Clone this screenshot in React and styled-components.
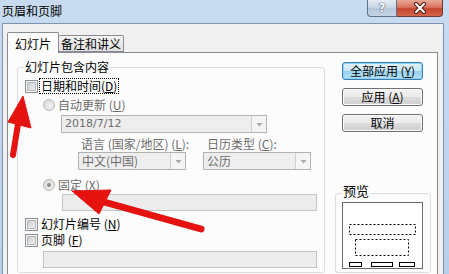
import React from "react";
import styled, { createGlobalStyle } from "styled-components";

const GlobalStyle = createGlobalStyle`
  html, body {
    margin: 0;
    padding: 0;
    background: #fff;
  }
  body {
    font-family: "Noto Sans CJK SC", "Noto Sans", sans-serif;
    font-size: 12px;
    color: #000;
  }
`;

const Window = styled.div`
  position: relative;
  width: 449px;
  height: 274px;
  overflow: hidden;
  display: flex;
  flex-direction: column;
  background: linear-gradient(to bottom, #c8dbf0, #b9cfe9);
`;

const TitleBar = styled.div`
  height: 23px;
  flex: none;
  display: flex;
  align-items: flex-start;
  padding: 0 6px 0 2px;
`;

const Title = styled.div`
  flex: 1;
  margin-top: 4px;
  line-height: 14px;
  font-size: 12px;
`;

const CaptionButton = styled.div`
  height: 16px;
  display: flex;
  align-items: center;
  justify-content: center;
  border: 1px solid ${(p) => (p.$close ? "#6d3a33" : "#5f7089")};
  border-top: none;
  width: ${(p) => (p.$close ? "45px" : "28px")};
  border-radius: ${(p) => (p.$close ? "0 0 4px 0" : "0 0 0 4px")};
  border-left: ${(p) => (p.$close ? "none" : undefined)};
  background: ${(p) =>
    p.$close
      ? "linear-gradient(to bottom, #e9a796 0%, #d9735f 45%, #c5432c 55%, #d3654d 100%)"
      : "linear-gradient(to bottom, #e4ebf4 0%, #cbd7e6 45%, #b7c7dc 55%, #c6d4e4 100%)"};
  color: #fff;
  font-family: "DejaVu Sans", sans-serif;
  font-weight: bold;
  font-size: 12px;
  text-shadow: 0 0 1px #2c3a4d, 0 0 1px #2c3a4d;
`;

const Client = styled.div`
  flex: 1;
  margin: 0 5px 0 2px;
  background: #f0f0f0;
  border: 1px solid #7e93ad;
  border-bottom: none;
  padding: 8px 5px 0 4px;
  display: flex;
  flex-direction: column;
`;

const TabStrip = styled.div`
  display: flex;
  align-items: flex-end;
  height: 21px;
  margin-bottom: -1px;
  position: relative;
  z-index: 1;
`;

const Tab = styled.div`
  box-sizing: border-box;
  height: ${(p) => (p.$active ? "21px" : "17px")};
  margin-bottom: ${(p) => (p.$active ? "0" : "1px")};
  width: ${(p) => p.$w}px;
  border: 1px solid #898c95;
  border-bottom: ${(p) => (p.$active ? "none" : "1px solid #898c95")};
  border-left: ${(p) => (p.$active ? "1px solid #898c95" : "none")};
  border-radius: 2px 2px 0 0;
  background: ${(p) =>
    p.$active ? "#fcfcfc" : "linear-gradient(to bottom, #f3f3f3, #e0e0e0)"};
  display: flex;
  align-items: center;
  justify-content: center;
  line-height: 14px;
  padding-top: ${(p) => (p.$active ? "1px" : "0")};
`;

const Panel = styled.div`
  flex: 1;
  border: 1px solid #898c95;
  background: #fcfcfc;
  display: flex;
  align-items: stretch;
  gap: 10px;
  padding: 9px 6px 30px 9px;
`;

const GroupBox = styled.div`
  position: relative;
  box-sizing: border-box;
  width: ${(p) => p.$w}px;
  margin-top: ${(p) => p.$mt || 0}px;
  border: 1px solid #d5dfe5;
  border-radius: 3px;
  padding: ${(p) => p.$pad};
  display: flex;
  flex-direction: column;
`;

const GroupCaption = styled.span`
  position: absolute;
  top: ${(p) => (p.$big ? "-10px" : "-8px")};
  left: 6px;
  padding: 0 1px;
  background: #fcfcfc;
  line-height: 14px;
  font-size: ${(p) => (p.$big ? "13px" : "12px")};
`;

const Row = styled.div`
  display: flex;
  align-items: center;
  height: ${(p) => p.$h || 16}px;
  margin-top: ${(p) => p.$mt || 0}px;
  margin-left: ${(p) => p.$indent || 0}px;
  gap: ${(p) => p.$gap || 0}px;
  line-height: 14px;
`;

const CheckBox = styled.span`
  box-sizing: border-box;
  flex: none;
  width: 13px;
  height: 13px;
  border: 1px solid #8e8f8f;
  background: linear-gradient(135deg, #c4c9cf, #f3f4f5);
  box-shadow: inset 0 0 0 1px #f6f6f6, inset 0 0 0 2px #b4b9bf;
`;

const Radio = styled.span`
  box-sizing: border-box;
  flex: none;
  width: 12px;
  height: 12px;
  border-radius: 50%;
  border: 1px solid #b9b9b9;
  background: radial-gradient(circle at 60% 60%, #f2f2f2, #d4d4d4);
  display: flex;
  align-items: center;
  justify-content: center;
  &::after {
    content: "";
    width: 4px;
    height: 4px;
    border-radius: 50%;
    background: #8c8c8c;
    display: ${(p) => (p.$checked ? "block" : "none")};
  }
`;

const Label = styled.span`
  margin-left: 3px;
  color: ${(p) => (p.$disabled ? "#6d6d6d" : "#000")};
  white-space: nowrap;
  width: ${(p) => (p.$w ? `${p.$w}px` : "auto")};
`;

const Focused = styled.span`
  margin-left: 2px;
  padding: 0 1px;
  outline: 1px dotted #000;
  outline-offset: 0;
  white-space: nowrap;
`;

const Combo = styled.div`
  box-sizing: border-box;
  width: ${(p) => p.$w}px;
  height: 18px;
  border: 1px solid #b2b2b2;
  background: #eeeeee;
  color: #6d6d6d;
  display: flex;
  align-items: center;
  padding-left: 3px;
  font-family: ${(p) => (p.$num ? '"DejaVu Sans", sans-serif' : "inherit")};
  font-size: ${(p) => (p.$num ? "11px" : "12px")};
`;

const ComboText = styled.span`
  flex: 1;
  white-space: nowrap;
`;

const ArrowBox = styled.span`
  box-sizing: border-box;
  width: 15px;
  height: 16px;
  border-left: 1px solid #cfcfcf;
  background: #f4f4f4;
  display: flex;
  align-items: center;
  justify-content: center;
`;

const TextBox = styled.div`
  box-sizing: border-box;
  width: ${(p) => p.$w}px;
  height: 17px;
  margin-top: ${(p) => p.$mt || 0}px;
  margin-left: ${(p) => p.$indent || 0}px;
  border: 1px solid #c4c4c4;
  background: #ededed;
`;

const Side = styled.div`
  width: 96px;
  display: flex;
  flex-direction: column;
`;

const Button = styled.div`
  box-sizing: border-box;
  width: 81px;
  height: 18px;
  margin: ${(p) => p.$mt || 0}px 0 0 7px;
  border: 1px solid ${(p) => (p.$default ? "#3c7fb1" : "#707070")};
  border-radius: 3px;
  background: ${(p) =>
    p.$default
      ? "linear-gradient(to bottom, #e5f4fc 0%, #c4e5f6 50%, #98d1ef 51%, #b3e0f7 100%)"
      : "linear-gradient(to bottom, #f2f2f2 0%, #ebebeb 50%, #dddddd 51%, #cfcfcf 100%)"};
  box-shadow: inset 0 0 0 1px ${(p) => (p.$default ? "#8ed0f3" : "#fcfcfc")};
  display: flex;
  align-items: center;
  justify-content: center;
  line-height: 14px;
  white-space: nowrap;
`;

const PreviewGroup = styled(GroupBox)`
  margin-top: auto;
  height: 80px;
`;

const Annotation = styled.svg`
  position: absolute;
  left: 0;
  top: 0;
  pointer-events: none;
`;

function Mn({ k }) {
  return (
    <>
      (<u>{k}</u>)
    </>
  );
}

function Arrow() {
  return (
    <svg width="7" height="5" viewBox="0 0 7 5">
      <path d="M0.5 1h6L3.5 4.5z" fill="#a9a9a9" />
    </svg>
  );
}

function PagePreview() {
  return (
    <svg width="81" height="67" viewBox="0 0 81 67">
      <rect x="0.5" y="0.5" width="80" height="66" fill="#fff" stroke="#6a6a6a" />
      <g fill="none" stroke="#000" strokeDasharray="2 2">
        <rect x="7.5" y="22.5" width="66" height="10" />
        <rect x="13.5" y="37.5" width="53" height="16" />
      </g>
      <g fill="none" stroke="#000">
        <rect x="7.5" y="60.5" width="12" height="4" />
        <rect x="29.5" y="60.5" width="21" height="4" />
        <rect x="57.5" y="60.5" width="15" height="4" />
      </g>
    </svg>
  );
}

export default function App() {
  return (
    <>
      <GlobalStyle />
      <Window>
        <TitleBar>
          <Title>页眉和页脚</Title>
          <CaptionButton>?</CaptionButton>
          <CaptionButton $close>
            <svg width="14" height="12" viewBox="0 0 14 12">
              <path d="M3 2l8 8M11 2l-8 8" stroke="#4a1c16" strokeWidth="4" strokeLinecap="round" />
              <path d="M3 2l8 8M11 2l-8 8" stroke="#fff" strokeWidth="2" strokeLinecap="round" />
            </svg>
          </CaptionButton>
        </TitleBar>
        <Client>
          <TabStrip>
            <Tab $active $w={52}>幻灯片</Tab>
            <Tab $w={65}>备注和讲义</Tab>
          </TabStrip>
          <Panel>
            <GroupBox $w={308} $mt={5} $pad="10px 7px 4px 7px">
              <GroupCaption>幻灯片包含内容</GroupCaption>
              <Row>
                <CheckBox />
                <Focused>
                  日期和时间<Mn k="D" />
                </Focused>
              </Row>
              <Row $mt={3} $indent={18}>
                <Radio />
                <Label $disabled>
                  自动更新 <Mn k="U" />
                </Label>
              </Row>
              <Row $mt={2} $indent={36} $h={18}>
                <Combo $w={206} $num>
                  <ComboText>2018/7/12</ComboText>
                  <ArrowBox>
                    <Arrow />
                  </ArrowBox>
                </Combo>
              </Row>
              <Row $mt={4} $indent={53} $h={14}>
                <Label $disabled $w={123}>
                  语言 (国家/地区) <Mn k="L" />:
                </Label>
                <Label $disabled>
                  日历类型 <Mn k="C" />:
                </Label>
              </Row>
              <Row $mt={1} $indent={53} $h={18} $gap={17}>
                <Combo $w={108}>
                  <ComboText>中文(中国)</ComboText>
                  <ArrowBox>
                    <Arrow />
                  </ArrowBox>
                </Combo>
                <Combo $w={108}>
                  <ComboText>公历</ComboText>
                  <ArrowBox>
                    <Arrow />
                  </ArrowBox>
                </Combo>
              </Row>
              <Row $mt={7} $indent={18}>
                <Radio $checked />
                <Label $disabled>
                  固定 <Mn k="X" />
                </Label>
              </Row>
              <TextBox $w={255} $mt={1} $indent={37} />
              <Row $mt={5}>
                <CheckBox />
                <Label>
                  幻灯片编号 <Mn k="N" />
                </Label>
              </Row>
              <Row>
                <CheckBox />
                <Label>
                  页脚 <Mn k="F" />
                </Label>
              </Row>
              <TextBox $w={274} $mt={3} $indent={18} />
            </GroupBox>
            <Side>
              <Button $default>
                全部应用 <Mn k="Y" />
              </Button>
              <Button $mt={8}>
                应用 <Mn k="A" />
              </Button>
              <Button $mt={8}>取消</Button>
              <PreviewGroup $w={96} $pad="8px 7px 3px 6px">
                <GroupCaption $big>预览</GroupCaption>
                <PagePreview />
              </PreviewGroup>
            </Side>
          </Panel>
        </Client>
        <Annotation width="449" height="274" viewBox="0 0 449 274">
          <g fill="#e5120f" stroke="#e5120f" strokeLinejoin="round">
            <path d="M13 155L18 124" strokeWidth="6" strokeLinecap="round" />
            <path d="M23 96L31 128L8 122Z" strokeWidth="1" />
            <path d="M201 229L104 202" strokeWidth="7" strokeLinecap="round" />
            <path d="M72 191L111 190L99 214Z" strokeWidth="1" />
          </g>
        </Annotation>
      </Window>
    </>
  );
}
